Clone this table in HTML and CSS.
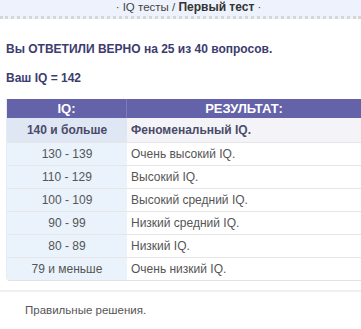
FILE: index.html
```html
<!DOCTYPE html>
<html>

	<head>
		<meta charset="UTF-8">
		<title>Первый тест</title>
		<link rel="stylesheet" href="styles.css">
	</head>

	<body>
		<div class="crumbs">
			&middot; IQ тесты / <b>Первый тест</b> &middot;
		</div>

		<div class="result">
			<p>Вы ОТВЕТИЛИ ВЕРНО на 25 из 40 вопросов.</p>
			<p>Ваш IQ = 142</p>
		</div>

		<table class="scale">
			<tr>
				<th class="iq">IQ:</th>
				<th>РЕЗУЛЬТАТ:</th>
			</tr>
			<tr class="current">
				<td class="iq">140 и больше</td>
				<td>Феноменальный IQ.</td>
			</tr>
			<tr>
				<td class="iq">130 - 139</td>
				<td>Очень высокий IQ.</td>
			</tr>
			<tr>
				<td class="iq">110 - 129</td>
				<td>Высокий IQ.</td>
			</tr>
			<tr>
				<td class="iq">100 - 109</td>
				<td>Высокий средний IQ.</td>
			</tr>
			<tr>
				<td class="iq">90 - 99</td>
				<td>Низкий средний IQ.</td>
			</tr>
			<tr>
				<td class="iq">80 - 89</td>
				<td>Низкий IQ.</td>
			</tr>
			<tr>
				<td class="iq">79 и меньше</td>
				<td>Очень низкий IQ.</td>
			</tr>
		</table>

		<div class="answers">Правильные решения.</div>
	</body>

</html>
```

FILE: styles.css
```css
* {
	margin: 0;
	padding: 0;
}

body {
	font-family: "Liberation Sans", Arial, sans-serif;
	font-size: 12px;
	color: #555555;
	background: #FFFFFF;
}

.crumbs {
	height: 16px;
	line-height: 15px;
	padding-left: 16px;
	text-align: center;
	font-size: 11.5px;
	color: #444444;
	background: #EEF2FC;
	border-bottom: 3px dotted #D4D8D4;
}

.crumbs b {
	color: #333333;
	font-size: 12px;
}

.result {
	padding: 23px 6px 0;
	font-weight: bold;
	color: #3C3C6E;
}

.result p {
	height: 15px;
	line-height: 15px;
	margin-bottom: 14px;
}

.result p:last-child {
	margin-bottom: 13px;
}

.scale {
	margin-left: 6px;
	width: 355px;
	border-collapse: separate;
	border-spacing: 0;
	border-bottom: 1px solid #E2E2E2;
	border-left: 1px solid #E6ECF4;
	border-bottom-left-radius: 4px;
}

.scale th {
	height: 19px;
	background: #6462A8;
	color: #FFFFFF;
	font-size: 13px;
	font-weight: bold;
	text-align: center;
}

.scale th.iq {
	border-right: 1px solid #7C7AB8;
}

.scale td {
	height: 22px;
	padding: 0 4px;
	border-top: 1px solid #E6E6E6;
	background: #FFFFFF;
}

.scale .iq {
	width: 112px;
	text-align: center;
}

.scale td.iq {
	background: #EAF2FC;
	color: #555555;
}

.scale .current td {
	border-top: none;
	height: 24px;
	background: #F4F4F8;
	font-weight: bold;
	color: #4A4A6A;
}

.scale .current td.iq {
	background: #DFE7F4;
}

.answers {
	margin-top: 9px;
	border-top: 2px solid #F0F0F0;
	padding: 12px 0 0 25px;
	font-size: 11.5px;
	color: #555555;
}
```
